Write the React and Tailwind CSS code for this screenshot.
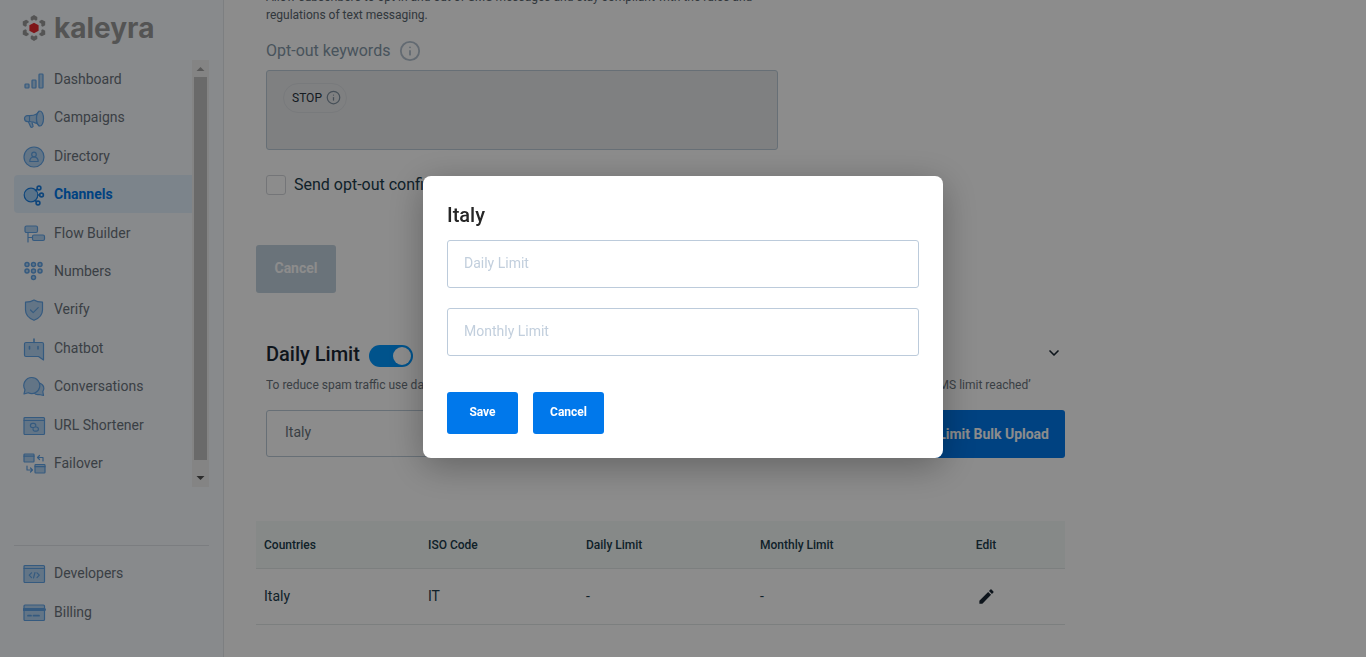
import { useState } from 'react';
import { Info, ChevronDown } from 'lucide-react';
import { MdEdit } from 'react-icons/md';

const icons = {
  dashboard: (
    <>
      <rect x="2" y="15" width="4" height="4" rx="0.8" />
      <rect x="9" y="11" width="4" height="8" rx="0.8" />
      <rect x="16" y="5" width="4" height="14" rx="0.8" />
    </>
  ),
  campaigns: (
    <>
      <path d="M13.5 7C11.5 8.300 9 8.600 6.500 8.600H4.500a3 3 0 0 0 0 6H6.500C9 14.600 11.500 15 13.500 16.500Z" />
      <ellipse cx="17" cy="11.500" rx="3.500" ry="7.500" />
      <path d="M13.700 7.200 16 4.200M13.700 16l2.300 3M6.500 9v5.500M5.500 15l2 4.500a1.300 1.300 0 0 0 2.500-1l-1-3" />
    </>
  ),
  directory: (
    <>
      <circle cx="11" cy="11" r="10" />
      <circle cx="11" cy="8.500" r="2.300" fill="none" />
      <path d="M6.800 15.500c0-6 8.400-6 8.400 0Z" fill="none" />
    </>
  ),
  channels: (
    <>
      <circle cx="8" cy="11" r="6.800" />
      <g fill="none" strokeWidth="1.600">
        <circle cx="16" cy="4" r="1.900" />
        <circle cx="18.500" cy="11" r="1.900" />
        <circle cx="15" cy="19" r="1.900" />
        <path d="m12.500 6.500 2-1.200M15 11h1.400M12 16.500l1.500 1" />
      </g>
    </>
  ),
  flow: (
    <>
      <rect x="2" y="3" width="12.500" height="6.500" rx="1.500" />
      <rect x="9.500" y="12" width="12" height="5.500" rx="1.500" />
      <path d="M5 9.500V19M5 14.500h4.500" fill="none" />
    </>
  ),
  numbers: (
    <g strokeWidth="1.500">
      {[[4, 3.5], [10.5, 3.5], [17, 3.5], [4, 10], [10.5, 10], [17, 10], [10.5, 16.5]].map(([x, y]) => (
        <circle key={`${x}-${y}`} cx={x} cy={y} r="2" />
      ))}
    </g>
  ),
  verify: (
    <>
      <path d="M11 1c2.500 1.800 5.500 2.200 8.500 2.200V11c0 5-3.500 8.300-8.500 10.300C6 19.300 2.500 16 2.500 11V3.200c3 0 6-.4 8.500-2.200Z" />
      <path d="m7.500 11 2.700 2.700 5-5" fill="none" />
    </>
  ),
  chatbot: (
    <>
      <path d="M3 4.500h16A1.500 1.500 0 0 1 20.500 6V22L15.500 18.500H3A1.500 1.500 0 0 1 1.500 17V6A1.500 1.500 0 0 1 3 4.500Z" />
      <path d="M11 1v3.500M6.500 8.500V11M15 8.500V11" strokeWidth="1.600" />
    </>
  ),
  conversations: (
    <>
      <path d="M16 7c5 1 6 6 3.800 8.700L20.500 19.500l-4.300-1c-2 .5-4-.2-5.200-1.700Z" />
      <path d="M8.800 1.500a8 8 0 1 1-3.500 15.200L1 18l1-4.300A8 8 0 0 1 8.800 1.500Z" />
    </>
  ),
  url: (
    <>
      <rect x="1" y="2.500" width="20.500" height="17" rx="1" />
      <path d="M1 5.500h20.500" />
      <path d="M11 12.500H9.500a2.100 2.100 0 0 1 0-4.200h1.300a2.100 2.100 0 0 1 1.900 2.700M11.500 12h1.800a2.100 2.100 0 0 1 0 4.200H12a2.100 2.100 0 0 1-1.900-2.700" fill="none" />
    </>
  ),
  failover: (
    <>
      <rect x="1" y="1" width="10" height="8" rx="0.800" />
      <rect x="12" y="11.500" width="10" height="8.500" rx="0.800" />
      <path d="M1 3.200h10M12 13.700h10" />
      <path d="M20 8V4.500h-5.500M16.500 2.500l-2 2 2 2M4 13v4h5.500M7.500 15l2 2-2 2" fill="none" />
    </>
  ),
  developers: (
    <>
      <rect x="1" y="2.500" width="20.500" height="17" rx="1" />
      <path d="M1 5.500h20.500" />
      <path d="m8.500 9.800-2.300 2.400 2.300 2.400M14 9.800l2.300 2.400-2.300 2.400M12 9.500l-1.500 5.500" fill="none" />
    </>
  ),
  billing: (
    <>
      <rect x="1" y="3" width="20.500" height="15.500" rx="1" />
      <path d="M1 7.500h20.500" strokeWidth="3" />
      <path d="M5 13.700h3M10.500 13.700h5.500" strokeWidth="1.800" />
    </>
  ),
};

const navItems = [
  { label: 'Dashboard', icon: 'dashboard' },
  { label: 'Campaigns', icon: 'campaigns' },
  { label: 'Directory', icon: 'directory' },
  { label: 'Channels', icon: 'channels', active: true },
  { label: 'Flow Builder', icon: 'flow' },
  { label: 'Numbers', icon: 'numbers' },
  { label: 'Verify', icon: 'verify' },
  { label: 'Chatbot', icon: 'chatbot' },
  { label: 'Conversations', icon: 'conversations' },
  { label: 'URL Shortener', icon: 'url' },
  { label: 'Failover', icon: 'failover' },
];

const footerItems = [
  { label: 'Developers', icon: 'developers' },
  { label: 'Billing', icon: 'billing' },
];

function NavLink({ label, icon, active }) {
  return (
    <a
      href="#"
      className={
        active
          ? 'flex h-[38px] items-center gap-2 rounded-l bg-[#e2f0fd] pl-[9px] text-sm font-bold text-[#0078eb]'
          : 'flex h-[38px] items-center gap-2 pl-[9px] text-sm text-[#6b747d]'
      }
    >
      <svg
        viewBox="0 0 23 23"
        className={
          active
            ? 'mt-[3px] h-[23px] w-[23px] fill-[#a5d2fa] stroke-[#1a7fe0]'
            : 'mt-[3px] h-[23px] w-[23px] fill-[#b4d6f5] stroke-[#62a5e8]'
        }
        strokeWidth="1.200"
        strokeLinecap="round"
        strokeLinejoin="round"
      >
        {icons[icon]}
      </svg>
      {label}
    </a>
  );
}

function Logo() {
  return (
    <div className="flex h-7 items-center gap-2 pl-[22px]">
      <svg viewBox="0 0 24 28" className="h-7 w-6">
        {[0, 60, 120, 180, 240, 300].map((angle) => (
          <path
            key={angle}
            d="M12 1 15.300 3v2.800L14 6.700 12 5.500 10 6.700 8.700 5.800V3Z"
            transform={`rotate(${angle} 12 14)`}
            fill="#9a9a9a"
          />
        ))}
        <path d="m12 8.700 4.600 2.600v5.400L12 19.300l-4.600-2.600v-5.400Z" fill="#e8292f" />
      </svg>
      <span className="font-[Inter] text-[28px] leading-7 font-bold text-[#9a9a9a]">kaleyra</span>
    </div>
  );
}

function Sidebar() {
  return (
    <aside className="flex w-56 shrink-0 flex-col border-r border-[#e4e8ec] bg-[#f8fbff] pt-[14px]">
      <Logo />
      <div className="mx-[14px] mt-[18px] flex h-[427px]">
        <nav className="flex h-[422px] flex-1 flex-col justify-between">
          {navItems.map((item) => (
            <NavLink key={item.label} {...item} />
          ))}
        </nav>
        <div className="flex w-[17px] flex-col items-center bg-[#f1f1f1]">
          <svg viewBox="0 0 17 17" className="h-[17px] w-[17px] fill-[#a3a3a3]">
            <path d="M4.500 11 8.500 7l4 4Z" />
          </svg>
          <div className="w-[13px] flex-1 bg-[#c1c1c1]" />
          <svg viewBox="0 0 17 17" className="mt-[10px] h-[17px] w-[17px] fill-[#505050]">
            <path d="M4.500 6 8.500 10l4-4Z" />
          </svg>
        </div>
      </div>
      <nav className="mx-[14px] mt-[58px] flex flex-col gap-px border-t border-[#e0e4e9] pt-2">
        {footerItems.map((item) => (
          <NavLink key={item.label} {...item} />
        ))}
      </nav>
    </aside>
  );
}

function OptOut() {
  return (
    <section className="px-[10px]">
      <p className="max-w-[512px] text-xs leading-[18px] text-[#5a6670]">
        Allow subscribers to opt in and out of SMS messages and stay compliant with the rules and regulations of text
        messaging.
      </p>
      <div className="mt-[17px] flex h-5 items-center gap-[9px] text-base text-[#8498a8]">
        Opt-out keywords
        <Info className="h-[22px] w-[22px] text-[#b4c2cf]" />
      </div>
      <div className="mt-[9px] h-20 max-w-[512px] rounded-[3px] border border-[#bccbd8] bg-[#e7e9eb] px-4 py-3">
        <span className="inline-flex h-[30px] items-center gap-1 rounded-full border border-[#dbdee2] pr-[5px] pl-2 text-xs text-[#27323c]">
          STOP
          <Info className="h-[15px] w-[15px] text-[#8091a0]" />
        </span>
      </div>
      <label className="mt-[25px] flex items-center gap-2 text-base leading-5 text-[#203c4c]">
        <input type="checkbox" className="h-5 w-5 appearance-none rounded-[3px] border border-[#d3d6da]" />
        Send opt-out confirmation message
      </label>
    </section>
  );
}

function DailyLimit({ onEdit }) {
  return (
    <section>
      <div className="px-[10px] pt-[51px]">
        <div className="flex h-6 items-center">
          <h2 className="pb-[3px] text-xl font-medium text-[#1b2733]">Daily Limit</h2>
          <label className="ml-[9px] flex">
            <input type="checkbox" defaultChecked className="peer sr-only" aria-label="Daily Limit" />
            <span className="flex h-[22px] w-11 items-center justify-end rounded-full bg-[#0097ff] px-[2px]">
              <span className="h-[18px] w-[18px] rounded-full bg-white" />
            </span>
          </label>
          <button type="button" aria-label="Collapse" className="-mr-[7px] ml-auto pb-[6px]">
            <ChevronDown className="h-4 w-4 text-[#1b2733]" strokeWidth={2.5} />
          </button>
        </div>
        <p className="mt-2 truncate text-xs leading-[18px] text-[#6b747d]">
          To reduce spam traffic use daily and monthly limits for every country. Messages over the limit will be rejected with the status ‘SMS limit reached’
        </p>
      </div>
      <div className="mt-4 flex items-start justify-between pl-[10px]">
        <select aria-label="Country" className="h-[47px] w-80 appearance-none rounded-[3px] border border-[#bccbd8] bg-transparent px-[18px] pb-[2px] text-sm text-[#6b747d]">
          <option>Italy</option>
        </select>
        <button type="button" className="h-12 rounded-[3px] bg-[#0078eb] px-4 text-sm font-bold text-white">
          Daily Limit Bulk Upload
        </button>
      </div>
      <table className="mt-[63px] w-full table-fixed text-left text-[#203c4c]">
        <thead>
          <tr className="h-12 border-b border-[#e2e8e8] bg-[#f5faf7] text-xs">
            <th className="w-[164px] pt-[2px] pl-2 font-medium">Countries</th>
            <th className="w-[158px] pt-[2px] pl-2 font-medium">ISO Code</th>
            <th className="w-[174px] pt-[2px] pl-2 font-medium">Daily Limit</th>
            <th className="pt-[2px] pl-2 font-medium">Monthly Limit</th>
            <th className="w-[158px] pt-[2px] text-center font-medium">Edit</th>
          </tr>
        </thead>
        <tbody>
          <tr className="h-14 border-b border-[#e2e8e8] text-sm">
            <td className="pb-[2px] pl-2">Italy</td>
            <td className="pb-[2px] pl-2">IT</td>
            <td className="pb-[2px] pl-2">-</td>
            <td className="pb-[2px] pl-2">-</td>
            <td className="pb-[2px] text-center">
              <button type="button" aria-label="Edit Italy" onClick={onEdit} className="align-middle">
                <MdEdit className="h-[19px] w-[19px] text-[#1b2733]" />
              </button>
            </td>
          </tr>
        </tbody>
      </table>
    </section>
  );
}

function LimitModal({ onClose }) {
  return (
    <div className="fixed inset-0 z-50 flex items-start justify-center bg-black/45 pt-44">
      <div role="dialog" aria-label="Italy" className="w-[520px] rounded-lg bg-white p-6 shadow-[0_8px_36px_rgba(0,0,0,0.3)]">
        <h3 className="text-xl leading-[30px] font-medium text-[#262626]">Italy</h3>
        <input
          aria-label="Daily Limit"
          placeholder="Daily Limit"
          className="mt-[10px] block h-12 w-full rounded-[3px] border border-[#bccbdb] px-4 pb-[2px] text-sm placeholder:text-[#c2cfdd]"
        />
        <input
          aria-label="Monthly Limit"
          placeholder="Monthly Limit"
          className="mt-5 block h-12 w-full rounded-[3px] border border-[#bccbdb] px-4 pb-[2px] text-sm placeholder:text-[#c2cfdd]"
        />
        <div className="mt-9 flex gap-[15px]">
          <button type="button" onClick={onClose} className="h-[42px] w-[71px] rounded-[3px] bg-[#0078eb] pb-[2px] text-xs font-bold text-white">
            Save
          </button>
          <button type="button" onClick={onClose} className="h-[42px] w-[71px] rounded-[3px] bg-[#0078eb] pb-[2px] text-xs font-bold text-white">
            Cancel
          </button>
        </div>
      </div>
    </div>
  );
}

export default function App() {
  const [isOpen, setIsOpen] = useState(true);

  return (
    <div className="flex h-screen overflow-hidden bg-white font-[Roboto,sans-serif]">
      <Sidebar />
      <main className="flex flex-1 flex-col justify-end overflow-hidden px-8 pb-8">
        <div className="w-full max-w-[809px]">
          <OptOut />
          <button type="button" className="mt-[50px] h-12 w-20 rounded-[3px] bg-[#c2d1de] pb-[2px] text-sm font-bold text-white">
            Cancel
          </button>
          <DailyLimit onEdit={() => setIsOpen(true)} />
        </div>
      </main>
      {isOpen && <LimitModal onClose={() => setIsOpen(false)} />}
    </div>
  );
}
